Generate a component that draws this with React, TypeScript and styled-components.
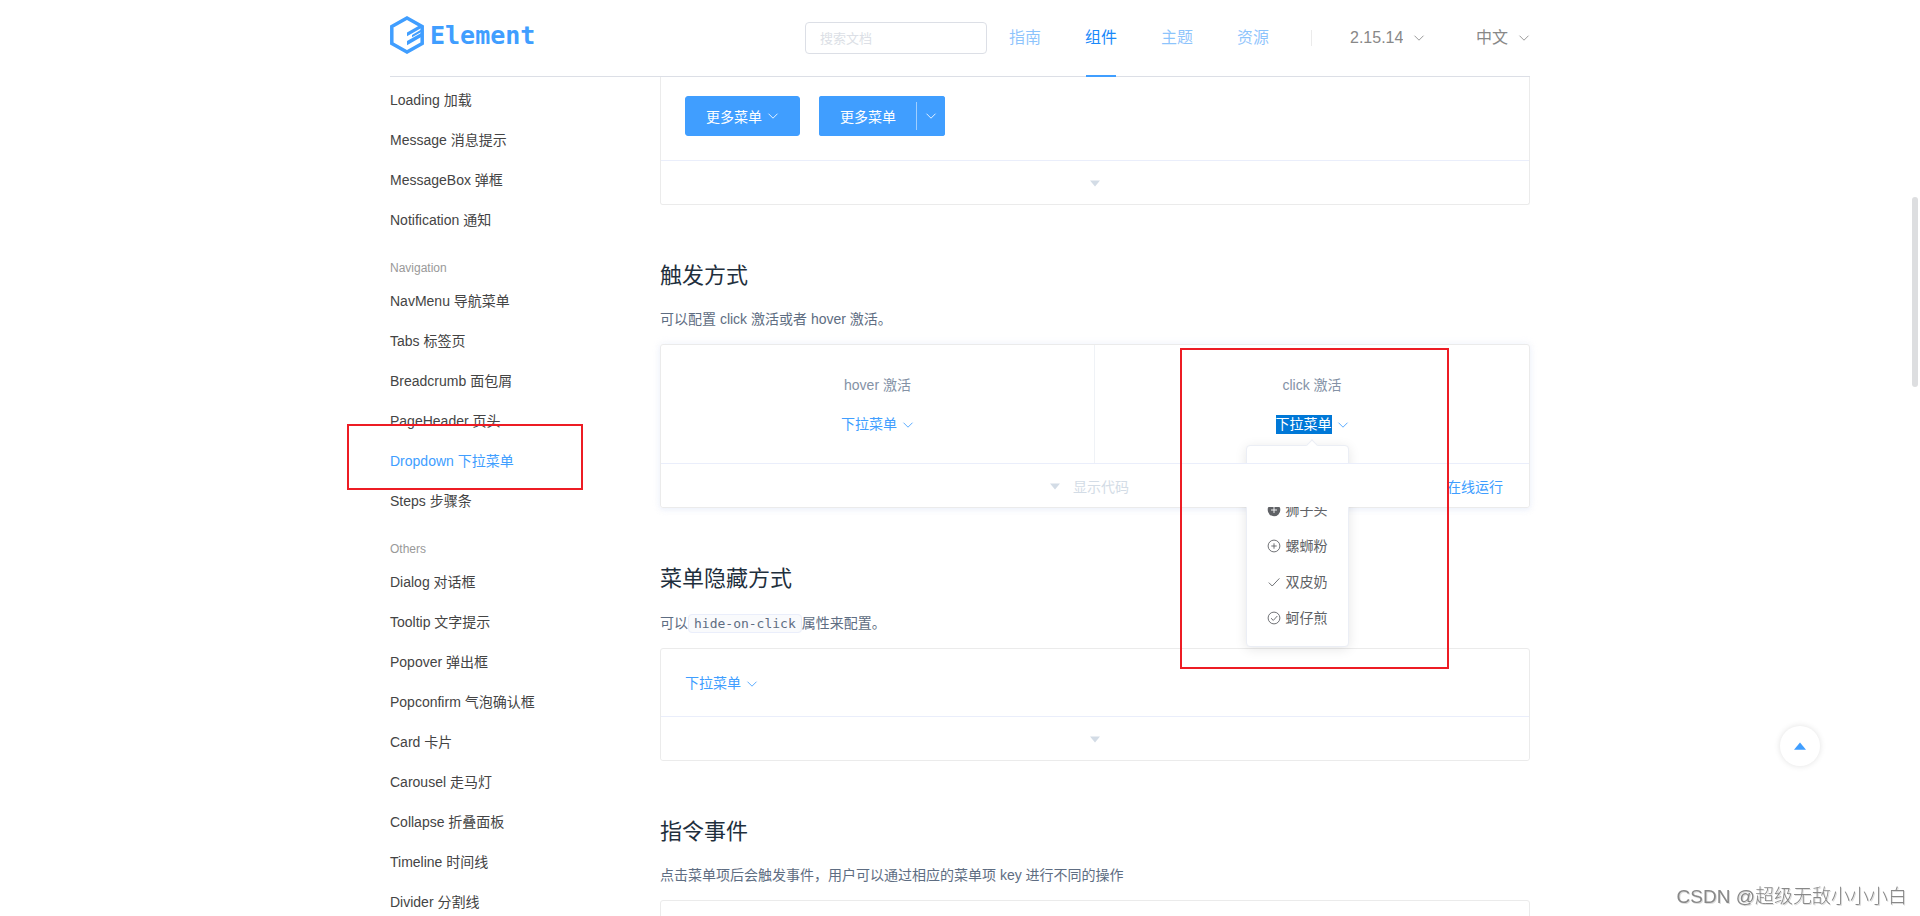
import React from 'react';
import styled, { createGlobalStyle } from 'styled-components';

const sans = `"Liberation Sans", "Noto Sans CJK SC", sans-serif`;
const primary = '#409eff';

const GlobalStyle = createGlobalStyle`
  *, *::before, *::after { box-sizing: border-box; }
  body { margin: 0; background: #fff; font-family: ${sans}; font-size: 14px; line-height: 19px; font-weight: 400; overflow: hidden; }
  button, input, select { font-family: inherit; font-weight: inherit; }
  button { cursor: pointer; }
  a { text-decoration: none; }
  h3, p, ul { margin: 0; padding: 0; }
  ul { list-style: none; }
`;

const Page = styled.div`
  display: flex;
  flex-direction: column;
  height: 100vh;
  overflow: hidden;
`;

const Header = styled.header`
  flex: none;
  display: flex;
  align-items: center;
  width: 100%;
  max-width: 1140px;
  height: 77px;
  margin: 0 auto;
  border-bottom: 1px solid #dcdfe6;
`;

const Logo = styled.a`
  display: flex;
  align-items: center;
  gap: 6px;
  margin-right: auto;
  padding-bottom: 6px;
  color: ${primary};
  font: bold 25px/36px "DejaVu Sans Mono", monospace;
  span { padding-top: 2px; }
`;

const Search = styled.input`
  width: 182px;
  height: 32px;
  padding: 0 14px;
  border: 1px solid #dcdfe6;
  border-radius: 4px;
  font-size: 13px;
  outline: none;
  &::placeholder { color: #dcdfe6; opacity: 1; }
`;

const Nav = styled.nav`
  display: flex;
`;

const NavLink = styled.a<{ $active?: boolean }>`
  position: relative;
  padding: 0 22px;
  font-size: 16px;
  line-height: 76px;
  color: ${p => (p.$active ? '#1989fa' : 'rgba(25, 137, 250, 0.5)')};
  &::after {
    content: '';
    display: ${p => (p.$active ? 'block' : 'none')};
    position: absolute;
    left: 23px;
    right: 23px;
    bottom: -1px;
    height: 2px;
    background: ${primary};
  }
`;

const Divider = styled.span`
  width: 1px;
  height: 16px;
  margin-left: 20px;
  background: #ebebeb;
`;

const Picker = styled.label<{ $gap: number; $width: number }>`
  display: flex;
  align-items: center;
  gap: 10px;
  margin-left: ${p => p.$gap}px;
  color: #888;
  select {
    width: ${p => p.$width}px;
    padding: 0;
    border: 0;
    background: none;
    appearance: none;
    color: inherit;
    font-size: 16px;
    line-height: 24px;
  }
`;

const Main = styled.div`
  flex: 1;
  display: flex;
  gap: 30px;
  width: 100%;
  min-height: 0;
  max-width: 1140px;
  margin: 0 auto;
`;

const Sidebar = styled.nav`
  flex: 0 0 240px;
  padding-top: 3px;
`;

const GroupTitle = styled.div`
  margin-top: 15px;
  font-size: 12px;
  line-height: 26px;
  color: #999;
`;

const SideItem = styled.li`
  position: relative;
`;

const SideLink = styled.a<{ $active?: boolean }>`
  display: block;
  line-height: 40px;
  color: ${p => (p.$active ? primary : '#444')};
`;

const Content = styled.main`
  flex: 1;
  min-width: 0;
`;

const Heading = styled.h3`
  margin: 55px 0 18px;
  font-size: 22px;
  line-height: 31px;
  font-weight: 400;
  color: #1f2f3d;
`;

const Paragraph = styled.p<{ $tall?: boolean }>`
  margin-bottom: 14px;
  line-height: ${p => (p.$tall ? 22 : 21)}px;
  color: #5e6d82;
`;

const Code = styled.code`
  padding: 1px 5px;
  border: 1px solid #eaeefb;
  border-radius: 4px;
  background: #f9fafc;
  font: 13px/19px "DejaVu Sans Mono", monospace;
`;

const Demo = styled.section<{ $raised?: boolean; $continued?: boolean }>`
  border: 1px solid #ebebeb;
  border-top-width: ${p => (p.$continued ? 0 : 1)}px;
  border-radius: ${p => (p.$continued ? '0 0 3px 3px' : '3px')};
  box-shadow: ${p =>
    p.$raised ? '0 0 8px 0 rgba(232, 237, 250, 0.6), 0 2px 4px 0 rgba(232, 237, 250, 0.5)' : 'none'};
`;

const Source = styled.div<{ $top?: number; $bottom?: number }>`
  display: flex;
  gap: 19px;
  padding: ${p => p.$top ?? 25}px 24px ${p => p.$bottom ?? 23}px;
`;

const Control = styled.div`
  position: relative;
  z-index: 2;
  display: grid;
  grid-template-columns: 1fr auto 1fr;
  align-items: center;
  height: 44px;
  border-top: 1px solid #eaeefb;
  border-radius: 0 0 3px 3px;
  background: #fff;
`;

const Toggle = styled.button<{ $open?: boolean }>`
  grid-column: 2;
  display: flex;
  align-items: center;
  gap: 10px;
  padding: ${p => (p.$open ? '0 14px 0 0' : '0')};
  border: 0;
  background: none;
  color: #d3dce6;
  font-size: 14px;
`;

const RunButton = styled.button`
  justify-self: end;
  padding: 0 26px;
  border: 0;
  background: none;
  color: ${primary};
  font-size: 14px;
`;

const PrimaryButton = styled.button`
  display: flex;
  align-items: center;
  gap: 5px;
  height: 40px;
  padding: 0 20px;
  border: 1px solid ${primary};
  border-radius: 3px;
  background: ${primary};
  color: #fff;
  font-size: 14px;
`;

const SplitButton = styled.div`
  display: flex;
  align-items: center;
  border-radius: 3px;
  background: ${primary};
  ${PrimaryButton} { border-right-width: 0; }
`;

const SplitLine = styled.span`
  width: 1px;
  height: 28px;
  background: rgba(255, 255, 255, 0.5);
`;

const SplitArrow = styled.button`
  display: flex;
  align-items: center;
  justify-content: center;
  width: 28px;
  height: 40px;
  padding: 0;
  border: 0;
  border-radius: 3px;
  background: ${primary};
  color: #fff;
`;

const Columns = styled.div`
  display: grid;
  grid-template-columns: 1fr 1fr;
`;

const Column = styled.div`
  position: relative;
  display: flex;
  flex-direction: column;
  align-items: center;
  gap: 20px;
  padding: 31px 0 29px;
  color: #8492a6;
  &:first-child { border-right: 1px solid #eff2f6; }
`;

const Dropdown = styled.div`
  position: relative;
`;

const Trigger = styled.button<{ $selected?: boolean }>`
  display: flex;
  align-items: center;
  gap: 5px;
  padding: 0;
  border: 0;
  background: none;
  color: ${primary};
  font-size: 14px;
  line-height: 19px;
  span {
    background: ${p => (p.$selected ? '#0078d7' : 'none')};
    color: ${p => (p.$selected ? '#fff' : 'inherit')};
  }
`;

const Menu = styled.ul`
  position: absolute;
  z-index: 1;
  top: calc(100% + 11px);
  right: 0;
  padding: 10px 0;
  border: 1px solid #ebeef5;
  border-radius: 4px;
  background: #fff;
  box-shadow: 0 2px 12px 0 rgba(0, 0, 0, 0.1);
  &::before {
    content: '';
    position: absolute;
    top: -5px;
    left: 61px;
    width: 8px;
    height: 8px;
    border: 1px solid #ebeef5;
    border-right: 0;
    border-bottom: 0;
    background: #fff;
    transform: rotate(45deg);
  }
`;

const MenuItem = styled.li`
  display: flex;
  align-items: center;
  gap: 5px;
  padding: 0 20px;
  line-height: 36px;
  white-space: nowrap;
  color: #606266;
`;

const SideMarker = styled.span`
  position: absolute;
  z-index: 3;
  top: -17px;
  left: -43px;
  width: 236px;
  height: 66px;
  border: 2px solid #ed1c24;
  pointer-events: none;
`;

const DemoMarker = styled.span`
  position: absolute;
  z-index: 3;
  top: 3px;
  right: 80px;
  width: 269px;
  height: 321px;
  border: 2px solid #ed1c24;
  pointer-events: none;
`;

const BackTop = styled.button`
  position: fixed;
  right: 100px;
  bottom: 150px;
  display: flex;
  align-items: center;
  justify-content: center;
  width: 40px;
  height: 40px;
  padding: 0;
  border: 0;
  border-radius: 50%;
  background: #fff;
  color: ${primary};
  box-shadow: 0 0 6px rgba(0, 0, 0, 0.12);
`;

const ScrollThumb = styled.div`
  position: fixed;
  top: 197px;
  right: 2px;
  width: 6px;
  height: 190px;
  border-radius: 3px;
  background: #dddee0;
`;

const Watermark = styled.div`
  position: fixed;
  right: 13px;
  bottom: 5px;
  font-size: 19px;
  line-height: 28px;
  font-weight: 300;
  color: #888;
  text-shadow: 1px 1px 0 #ddd;
`;

const Chevron = () => (
  <svg width="12" height="12" viewBox="0 0 12 12" fill="none" stroke="currentColor" strokeOpacity="0.85" aria-hidden="true">
    <path d="M1.5 3.7 6 8.2l4.5-4.5" />
  </svg>
);

const Caret = () => (
  <svg width="16" height="16" viewBox="0 0 16 16" fill="currentColor" aria-hidden="true">
    <path d="M3 5.5h10l-5 6z" />
  </svg>
);

type IconName = 'plus' | 'plusSolid' | 'plusOutline' | 'check' | 'checkOutline';

const MenuIcon = ({ name }: { name: IconName }) => (
  <svg width="14" height="14" viewBox="0 0 14 14" fill="none" stroke="currentColor" strokeWidth="0.9" aria-hidden="true">
    {name === 'plus' && <path d="M7 2v10M2 7h10" />}
    {name === 'plusSolid' && (
      <>
        <circle cx="7" cy="7" r="6.3" fill="currentColor" stroke="none" />
        <path d="M7 4v6M4 7h6" stroke="#fff" />
      </>
    )}
    {name === 'plusOutline' && (
      <>
        <circle cx="7" cy="7" r="5.9" />
        <path d="M7 4.3v5.4M4.3 7h5.4" />
      </>
    )}
    {name === 'check' && <path d="M1.8 7.6 5.2 11l7.2-7.6" />}
    {name === 'checkOutline' && (
      <>
        <circle cx="7" cy="7" r="5.9" />
        <path d="M4 7.2l2.3 2.2 4-4.4" />
      </>
    )}
  </svg>
);

const LogoMark = () => (
  <svg width="34" height="38" viewBox="0 0 34 38" aria-hidden="true">
    <path
      d="M17 2 32.2 10.6v16.8L17 36 1.8 27.4V10.6z"
      fill="none"
      stroke="currentColor"
      strokeWidth="3.5"
    />
    <path
      d="M17 16.4 31 8.4v3.8L17 20.2zM22 18.9 33 12.6V15L22 21.3zM17 25l16-9.1v4.2L17 29.2z"
      fill="currentColor"
    />
  </svg>
);

type Item = { label: string; active?: boolean };
type Group = { title?: string; items: Item[] };

const groups: Group[] = [
  {
    items: [
      { label: 'Loading 加载' },
      { label: 'Message 消息提示' },
      { label: 'MessageBox 弹框' },
      { label: 'Notification 通知' },
    ],
  },
  {
    title: 'Navigation',
    items: [
      { label: 'NavMenu 导航菜单' },
      { label: 'Tabs 标签页' },
      { label: 'Breadcrumb 面包屑' },
      { label: 'PageHeader 页头' },
      { label: 'Dropdown 下拉菜单', active: true },
      { label: 'Steps 步骤条' },
    ],
  },
  {
    title: 'Others',
    items: [
      { label: 'Dialog 对话框' },
      { label: 'Tooltip 文字提示' },
      { label: 'Popover 弹出框' },
      { label: 'Popconfirm 气泡确认框' },
      { label: 'Card 卡片' },
      { label: 'Carousel 走马灯' },
      { label: 'Collapse 折叠面板' },
      { label: 'Timeline 时间线' },
      { label: 'Divider 分割线' },
    ],
  },
];

const menuItems: { icon: IconName; label: string }[] = [
  { icon: 'plus', label: '黄金糕' },
  { icon: 'plusSolid', label: '狮子头' },
  { icon: 'plusOutline', label: '螺蛳粉' },
  { icon: 'check', label: '双皮奶' },
  { icon: 'checkOutline', label: '蚵仔煎' },
];

const DropdownTrigger = ({ selected }: { selected?: boolean }) => (
  <Trigger type="button" $selected={selected} aria-haspopup="menu">
    <span>下拉菜单</span>
    <Chevron />
  </Trigger>
);

const ClosedControl = () => (
  <Control>
    <Toggle type="button" aria-label="显示代码">
      <Caret />
    </Toggle>
  </Control>
);

export default function App() {
  return (
    <Page>
      <GlobalStyle />
      <Header>
        <Logo href="#">
          <LogoMark />
          <span>Element</span>
        </Logo>
        <Search type="text" placeholder="搜索文档" aria-label="搜索文档" />
        <Nav>
          <NavLink href="#guide">指南</NavLink>
          <NavLink href="#component" $active>组件</NavLink>
          <NavLink href="#theme">主题</NavLink>
          <NavLink href="#resource">资源</NavLink>
        </Nav>
        <Divider />
        <Picker $gap={38} $width={53}>
          <select aria-label="版本">
            <option>2.15.14</option>
          </select>
          <Chevron />
        </Picker>
        <Picker $gap={51} $width={32}>
          <select aria-label="语言">
            <option>中文</option>
          </select>
          <Chevron />
        </Picker>
      </Header>

      <Main>
        <Sidebar>
          {groups.map((group, i) => (
            <div key={i}>
              {group.title && <GroupTitle>{group.title}</GroupTitle>}
              <ul>
                {group.items.map(item => (
                  <SideItem key={item.label}>
                    <SideLink href="#" $active={item.active}>{item.label}</SideLink>
                    {item.active && <SideMarker />}
                  </SideItem>
                ))}
              </ul>
            </div>
          ))}
        </Sidebar>

        <Content>
          <Demo $continued>
            <Source $top={19} $bottom={24}>
              <PrimaryButton type="button">
                更多菜单
                <Chevron />
              </PrimaryButton>
              <SplitButton>
                <PrimaryButton type="button">更多菜单</PrimaryButton>
                <SplitLine />
                <SplitArrow type="button" aria-label="展开">
                  <Chevron />
                </SplitArrow>
              </SplitButton>
            </Source>
            <ClosedControl />
          </Demo>

          <Heading>触发方式</Heading>
          <Paragraph>可以配置 click 激活或者 hover 激活。</Paragraph>
          <Demo $raised>
            <Columns>
              <Column>
                <span>hover 激活</span>
                <DropdownTrigger />
              </Column>
              <Column>
                <span>click 激活</span>
                <Dropdown>
                  <DropdownTrigger selected />
                  <Menu>
                    {menuItems.map(item => (
                      <MenuItem key={item.label}>
                        <MenuIcon name={item.icon} />
                        {item.label}
                      </MenuItem>
                    ))}
                  </Menu>
                </Dropdown>
                <DemoMarker />
              </Column>
            </Columns>
            <Control>
              <Toggle type="button" $open>
                <Caret />
                显示代码
              </Toggle>
              <RunButton type="button">在线运行</RunButton>
            </Control>
          </Demo>

          <Heading>菜单隐藏方式</Heading>
          <Paragraph $tall>
            可以<Code>hide-on-click</Code>属性来配置。
          </Paragraph>
          <Demo>
            <Source>
              <DropdownTrigger />
            </Source>
            <ClosedControl />
          </Demo>

          <Heading>指令事件</Heading>
          <Paragraph>点击菜单项后会触发事件，用户可以通过相应的菜单项 key 进行不同的操作</Paragraph>
          <Demo>
            <Source />
          </Demo>
        </Content>
      </Main>

      <BackTop type="button" aria-label="回到顶部">
        <svg width="12" height="8" viewBox="0 0 12 8" fill="currentColor" aria-hidden="true">
          <path d="M6 .5 12 7.8H0z" />
        </svg>
      </BackTop>
      <ScrollThumb />
      <Watermark>CSDN @超级无敌小小小白</Watermark>
    </Page>
  );
}
